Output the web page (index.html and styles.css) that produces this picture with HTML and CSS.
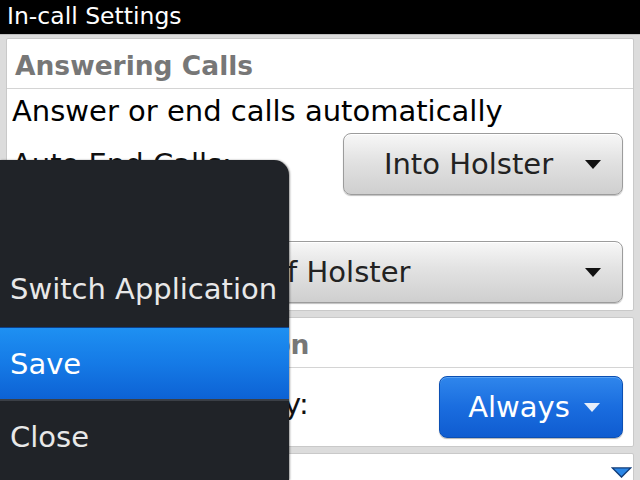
FILE: index.html
```html
<!DOCTYPE html>
<html lang="en">
<head>
    <meta charset="UTF-8">
    <meta name="viewport" content="width=device-width, initial-scale=1.0">
    <title>In-call Settings</title>
    <link rel="stylesheet" href="styles.css">
</head>
<body>
    <div class="screen">
        <div class="title-bar">In-call Settings</div>

        <div class="content">
            <div class="panel">
                <div class="panel-header">Answering Calls</div>
                <div class="panel-body">
                    <p class="note">Answer or end calls automatically</p>

                    <div class="field-row">
                        <span class="field-label">Auto End Calls:</span>
                        <div class="choice choice-narrow">
                            <span class="choice-text">Into Holster</span>
                            <svg class="choice-arrow" viewBox="0 0 16 9"><path d="M0 0 H16 L8 9 Z"/></svg>
                        </div>
                    </div>

                    <div class="field-label field-label-block">Auto Answer Calls:</div>
                    <div class="choice choice-wide">
                        <span class="choice-text">Out of Holster</span>
                        <svg class="choice-arrow" viewBox="0 0 16 9"><path d="M0 0 H16 L8 9 Z"/></svg>
                    </div>
                </div>
            </div>

            <div class="panel">
                <div class="panel-header">Ongoing Call Action</div>
                <div class="panel-body">
                    <div class="field-row">
                        <span class="field-label">Show Name Display:</span>
                        <div class="choice choice-blue">
                            <span class="choice-text">Always</span>
                            <svg class="choice-arrow" viewBox="0 0 16 9"><path d="M0 0 H16 L8 9 Z"/></svg>
                        </div>
                    </div>
                </div>
            </div>

            <div class="panel panel-last"></div>
        </div>

        <!-- more content below -->
        <svg class="scroll-hint" viewBox="0 0 22 12"><path d="M1 1 H21 L11 11 Z"/></svg>

        <div class="menu">
            <div class="menu-item">Switch Application</div>
            <div class="menu-item active">Save</div>
            <div class="menu-item">Close</div>
        </div>
    </div>
</body>
</html>
```

FILE: styles.css
```css
* {
    margin: 0;
    padding: 0;
    box-sizing: border-box;
}

body {
    font-family: "DejaVu Sans", Arial, sans-serif;
    background: #000;
}

.screen {
    position: relative;
    width: 640px;
    height: 480px;
    overflow: hidden;
    background: #dcdcdc;
}

.title-bar {
    height: 34px;
    background: #000;
    color: #fff;
    font-size: 23.5px;
    line-height: 33px;
    padding-left: 7px;
    white-space: nowrap;
}

.content {
    display: flex;
    flex-direction: column;
    gap: 6px;
    padding: 3px 6px 0 6px;
    border-top: 1px solid #bdbdbd;
}

.panel {
    background: #fff;
    border: 1px solid #c9c9c9;
    border-radius: 2px;
}

.panel-header {
    height: 50px;
    line-height: 54px;
    padding-left: 8px;
    font-size: 26.5px;
    font-weight: bold;
    color: #777;
    border-bottom: 1px solid #d4d4d4;
    white-space: nowrap;
}

.panel-body {
    padding: 0 10px 7px 5px;
}

.note {
    font-size: 29px;
    line-height: 44px;
    color: #000;
    white-space: nowrap;
}

.field-row {
    display: flex;
    justify-content: space-between;
    align-items: center;
}

.field-label {
    font-size: 29px;
    color: #111;
    white-space: nowrap;
}

.field-label-block {
    line-height: 46px;
}

.choice {
    display: flex;
    align-items: center;
    height: 62px;
    padding: 0 21px 0 8px;
    border: 1px solid #9c9c9c;
    border-radius: 8px;
    background: linear-gradient(#f7f7f7, #e2e2e2 45%, #cfcfcf);
    box-shadow: inset 0 1px 0 #fff, 0 1px 1px rgba(0, 0, 0, 0.25);
    color: #222;
    font-size: 29px;
}

.choice-text {
    flex: 1;
    text-align: center;
    white-space: nowrap;
}

.choice-arrow {
    width: 16px;
    height: 9px;
    fill: #111;
}

.choice-narrow {
    width: 280px;
    flex-shrink: 0;
}

.choice-wide {
    width: 100%;
    padding-left: 20px;
}

.choice-blue {
    width: 184px;
    height: 62px;
    flex-shrink: 0;
    margin: 8px 0 1px;
    border-color: #0b4fb3;
    background: linear-gradient(#2f86ec, #1a6ddf 50%, #0f5cd0);
    box-shadow: inset 0 1px 0 #5aa2f2, 0 1px 1px rgba(0, 0, 0, 0.3);
    color: #fff;
    padding-right: 22px;
    padding-left: 14px;
}

.choice-blue .choice-arrow {
    fill: #e6eefa;
}

.panel-last {
    height: 40px;
}

.scroll-hint {
    position: absolute;
    right: 8px;
    bottom: 2px;
    width: 21px;
    height: 11px;
    fill: #2a86e6;
    stroke: #123c78;
    stroke-width: 1.5;
}

.menu {
    position: absolute;
    left: 0;
    top: 160px;
    width: 289px;
    height: 320px;
    display: flex;
    flex-direction: column;
    justify-content: flex-end;
    padding-bottom: 5px;
    background: #202328;
    border-top-right-radius: 15px;
    box-shadow: 1px 0 2px rgba(0, 0, 0, 0.4);
}

.menu-item {
    height: 74px;
    line-height: 72px;
    padding-left: 10px;
    font-size: 29px;
    color: #e8e8e8;
    white-space: nowrap;
    border-top: 2px solid #3b3f46;
}

.menu-item:first-child {
    border-top: none;
}

.menu-item.active {
    background: linear-gradient(#1e90f2, #157ae6 50%, #0d62d4);
    border-top: 1px solid #0b3f8a;
    border-bottom: 2px solid #3b3f46;
    color: #fff;
}

.menu-item.active + .menu-item {
    border-top: none;
}
```
